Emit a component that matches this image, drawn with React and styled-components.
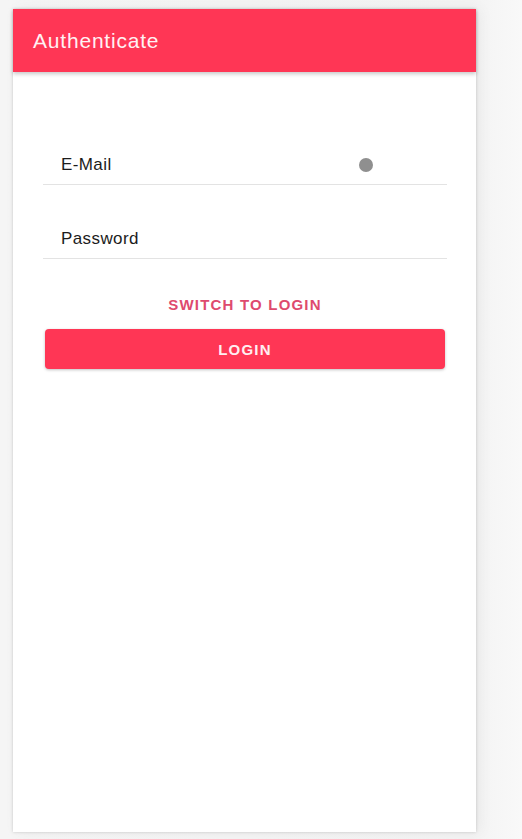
import React from "react";
import styled, { createGlobalStyle } from "styled-components";

const GlobalStyle = createGlobalStyle`
  html, body {
    margin: 0;
    padding: 0;
    background: #f4f4f4;
    font-family: "Liberation Sans", Arial, Helvetica, sans-serif;
  }
`;

const Page = styled.div`
  width: 522px;
  height: 839px;
  box-sizing: border-box;
  padding: 9px 0 0 13px;
  background: linear-gradient(to right, #f5f5f5 0%, #f3f3f3 90%, #f9f9f9 100%);
`;

const Screen = styled.div`
  width: 463px;
  height: 823px;
  background: #ffffff;
  box-shadow: 0 0 3px rgba(0, 0, 0, 0.18), 4px 0 14px rgba(0, 0, 0, 0.05);
  display: flex;
  flex-direction: column;
`;

const Toolbar = styled.header`
  height: 63px;
  background: #ff3655;
  display: flex;
  align-items: center;
  padding-left: 20px;
  box-shadow: 0 2px 4px rgba(0, 0, 0, 0.22);
  position: relative;
  z-index: 1;
`;

const Title = styled.h1`
  margin: 0;
  font-size: 21px;
  font-weight: 400;
  color: #fff1f3;
  letter-spacing: 0.8px;
`;

const Form = styled.form`
  display: flex;
  flex-direction: column;
  padding: 75px 29px 0 30px;
`;

const Field = styled.label`
  height: 38px;
  margin-bottom: ${(p) => p.gap || 0}px;
  border-bottom: 1px solid #e3e3e3;
  display: flex;
  align-items: center;
  justify-content: space-between;
  padding: 0 74px 1px 18px;
  box-sizing: border-box;
  width: 404px;
`;

const Label = styled.span`
  font-size: 17px;
  letter-spacing: 0.4px;
  color: #1c1c1c;
`;

const Dot = styled.span`
  width: 14px;
  height: 14px;
  border-radius: 50%;
  background: #8f8f8f;
`;

const SwitchButton = styled.button`
  border: none;
  background: none;
  padding: 0;
  margin: 37px 0 16px 0;
  align-self: center;
  font-family: inherit;
  font-size: 15px;
  font-weight: 700;
  letter-spacing: 1.2px;
  color: #de4a6e;
`;

const LoginButton = styled.button`
  width: 400px;
  margin-left: 2px;
  height: 40px;
  border: none;
  border-radius: 4px;
  background: #ff3655;
  color: #ffeef1;
  font-family: inherit;
  font-size: 15px;
  font-weight: 700;
  letter-spacing: 1.2px;
  box-shadow: 0 1px 3px rgba(0, 0, 0, 0.25);
`;

export default function App() {
  return (
    <>
      <GlobalStyle />
      <Page>
        <Screen>
          <Toolbar>
            <Title>Authenticate</Title>
          </Toolbar>
          <Form onSubmit={(e) => e.preventDefault()}>
            <Field gap={36}>
              <Label>E-Mail</Label>
              <Dot />
            </Field>
            <Field>
              <Label>Password</Label>
            </Field>
            <SwitchButton type="button">SWITCH TO LOGIN</SwitchButton>
            <LoginButton type="submit">LOGIN</LoginButton>
          </Form>
        </Screen>
      </Page>
    </>
  );
}
